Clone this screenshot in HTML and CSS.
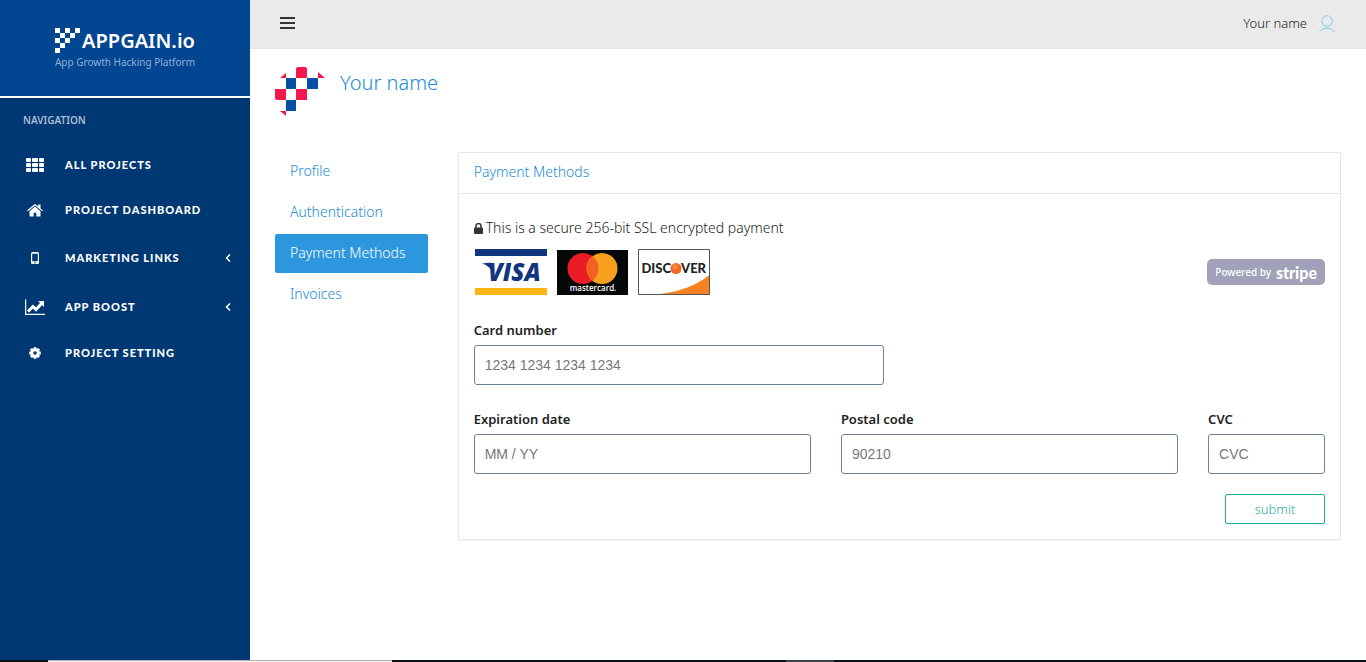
FILE: index.html
```
<!DOCTYPE html>
<html lang="en">
<head>
<meta charset="UTF-8">
<meta name="viewport" content="width=device-width, initial-scale=1">
<title>Payment Methods</title>
<link rel="stylesheet" href="styles.css">
</head>
<body>
<div class="wrapper">
  <!-- sidebar -->
  <aside class="sidebar">
    <a href="#" class="brand">
      <span class="brand-row">
        <svg class="brand-mark" width="25" height="25" viewBox="0 0 5 5" fill="#fff" shape-rendering="crispEdges"><path d="M0 0h1v1H0zM2 0h1v1H2zM4 0h1v1H4zM1 1h1v1H1zM3 1h1v1H3zM0 2h1v1H0zM2 2h1v1H2zM1 3h1v1H1zM0 4h1v1H0z"/></svg>
        <span class="brand-name">APPGAIN.io</span>
      </span>
      <span class="brand-tag">App Growth Hacking Platform</span>
    </a>
    <p class="nav-title">NAVIGATION</p>
    <nav class="nav">
      <a href="#"><span class="icon"><svg width="18" height="14" viewBox="0 0 18 14" fill="#fff"><rect width="5" height="4" rx="1"/><rect x="6" width="6" height="4" rx="1"/><rect x="13" width="5" height="4" rx="1"/><rect y="5" width="5" height="4" rx="1"/><rect x="6" y="5" width="6" height="4" rx="1"/><rect x="13" y="5" width="5" height="4" rx="1"/><rect y="10" width="5" height="4" rx="1"/><rect x="6" y="10" width="6" height="4" rx="1"/><rect x="13" y="10" width="5" height="4" rx="1"/></svg></span>ALL PROJECTS</a>
      <a href="#"><span class="icon"><svg width="16" height="16" viewBox="0 0 16 16" fill="#fff"><path d="M8 4.6 2.5 9.2V14q0 .6.6.6h3.600v-3.800h2.600v3.800h3.600q.6 0 .6-.6V9.200z"/><path d="M15.800 8.300 13.500 6.400V2.400h-2.300v2L8.900 2.500q-.9-.7-1.800 0L.2 8.300l.7.900L8 3.400l7.100 5.800z"/></svg></span>PROJECT DASHBOARD</a>
      <a href="#"><span class="icon"><svg width="8" height="20" viewBox="0 0 8 20"><path d="M1.500 4h5Q8 4 8 5.500v9Q8 16 6.500 16h-5Q0 16 0 14.500v-9Q0 4 1.500 4zM1.200 5.800v7.400h5.600V5.800zM4 14a.7.7 0 1 0 .01 0z" fill="#fff" fill-rule="evenodd"/></svg></span>MARKETING LINKS<svg class="arrow" width="6" height="8" viewBox="0 0 6 8"><path d="M5 .5 1.500 4 5 7.500" fill="none" stroke="#fff" stroke-width="1.500"/></svg></a>
      <a href="#"><span class="icon"><svg width="20" height="18" viewBox="0 0 20 18"><path d="M.6 1.500v14.900H20" fill="none" stroke="#fff" stroke-width="1.300"/><path d="m3 13.500 5-5 3 3 6-6.500" fill="none" stroke="#fff" stroke-width="3"/><path d="M13 3h6v6z" fill="#fff"/></svg></span>APP BOOST<svg class="arrow" width="6" height="8" viewBox="0 0 6 8"><path d="M5 .5 1.500 4 5 7.500" fill="none" stroke="#fff" stroke-width="1.500"/></svg></a>
      <a href="#"><span class="icon"><svg width="12" height="14" viewBox="-6 -7 12 14"><g fill="#fff"><rect x="-1.500" y="-5.800" width="3" height="11.600" rx=".5"/><rect x="-1.500" y="-5.800" width="3" height="11.600" rx=".5" transform="rotate(45)"/><rect x="-1.500" y="-5.800" width="3" height="11.600" rx=".5" transform="rotate(90)"/><rect x="-1.500" y="-5.800" width="3" height="11.600" rx=".5" transform="rotate(135)"/><circle r="4.600"/></g><circle r="1.800" fill="#003873"/></svg></span>PROJECT SETTING</a>
    </nav>
  </aside>

  <div class="main">
    <!-- top bar -->
    <header class="topbar">
      <button type="button" class="menu-btn" aria-label="Menu"><svg width="15" height="12" viewBox="0 0 15 12" fill="#333"><path d="M0 0h15v2H0zM0 5h15v2H0zM0 10h15v2H0z"/></svg></button>
      <a href="#" class="user">Your name
        <svg width="16" height="17" viewBox="0 0 16 17" fill="none" stroke="#7fcbee"><circle cx="8" cy="6" r="5.300"/><path d="M.5 16.500q3-3.500 7.500-3.500t7.500 3.500"/></svg>
      </a>
    </header>

    <main class="content">
      <div class="profile">
        <svg class="avatar" width="50" height="50" viewBox="0 0 50 50">
          <path fill="#f4184f" d="M21 2q0-2 2-2h7q2 0 2 2v9H21zM5 11l6-5v5zM43 5l7 6h-7zM0 22h11v11H2q-2 0-2-2zM21 22h11v11H21zM5 44h6v5z"/>
          <path fill="#0450a4" d="M11 11h10v11H11zM32 11h11v11H32zM11 33h10v11H11z"/>
        </svg>
        <h1>Your name</h1>
      </div>

      <div class="grid">
        <nav class="tabs">
          <a href="#">Profile</a>
          <a href="#">Authentication</a>
          <a href="#" class="active">Payment Methods</a>
          <a href="#">Invoices</a>
        </nav>

        <section class="panel">
          <h2>Payment Methods</h2>
          <form class="panel-body">
            <p class="secure"><svg width="9" height="11" viewBox="0 0 9 11"><path d="M2 5V3a2.500 2.500 0 0 1 5 0v2" fill="none" stroke="#333" stroke-width="1.500"/><rect y="4.500" width="9" height="6.500" rx="1" fill="#333"/></svg>This is a secure 256-bit SSL encrypted payment</p>
            <div class="cards">
              <svg width="72" height="46" viewBox="0 0 72 46">
                <path fill="#12357f" d="M0 0h72v7H0z"/>
                <path fill="#fdb515" d="M0 39h72v7H0z"/>
                <path fill="#12357f" d="M7 14.500q5-1 9-.7l2 5-2 2q-3-4.600-9-6.300z"/>
                <text class="visa" x="13" y="32">VISA</text>
              </svg>
              <svg width="71" height="45" viewBox="0 0 71 45">
                <path fill="#050708" d="M0 0h71v45H0z"/>
                <circle cx="26" cy="18.500" r="15.500" fill="#eb1c26"/>
                <circle cx="45" cy="18.500" r="15.500" fill="#f89f1d"/>
                <path fill="#f26022" d="M35.500 6.250a15.500 15.500 0 0 1 0 24.500 15.500 15.500 0 0 1 0-24.500z"/>
                <text class="mastercard" x="36" y="41" text-anchor="middle">mastercard.</text>
              </svg>
              <svg width="72" height="46" viewBox="0 0 72 46">
                <path fill="#f58220" d="M16 45.500Q50 43 71.500 26v19.500z"/>
                <path fill="none" stroke="#555" d="M.5.5h71v45H.5z"/>
                <text class="discover" x="33" y="24" text-anchor="end">DISC</text>
                <circle cx="38" cy="19.500" r="5.500" fill="#ef6a24"/>
                <circle cx="37" cy="18" r="2.500" fill="#f58b42"/>
                <text class="discover" x="43" y="24">VER</text>
              </svg>
              <span class="stripe">Powered by <b>stripe</b></span>
            </div>
            <div class="grid fields">
              <div class="field w6">
                <label for="card">Card number</label>
                <input type="text" id="card" placeholder="1234 1234 1234 1234">
              </div>
              <div class="field w5">
                <label for="expiry">Expiration date</label>
                <input type="text" id="expiry" placeholder="MM / YY">
              </div>
              <div class="field w5">
                <label for="postal">Postal code</label>
                <input type="text" id="postal" placeholder="90210">
              </div>
              <div class="field w2">
                <label for="cvc">CVC</label>
                <input type="text" id="cvc" placeholder="CVC">
              </div>
            </div>
            <button type="submit" class="submit">submit</button>
          </form>
        </section>
      </div>
    </main>
  </div>
</div>
<!-- thin strip along the bottom edge -->
<div class="strip"><span class="light"></span><span class="grey"></span></div>
</body>
</html>
```

FILE: styles.css
```
* {
	box-sizing: border-box;
}
body {
	margin: 0;
	min-height: 100vh;
	display: flex;
	flex-direction: column;
	background-color: #fff;
	color: #222;
	font-family: "Noto Sans", "Open Sans", sans-serif;
	font-size: 13px;
	font-weight: 300;
	line-height: 20px;
}
a {
	color: #1a8ad6;
	text-decoration: none;
}
svg {
	flex: none;
}
h1, h2, p {
	margin: 0;
	font-weight: 300;
}
.wrapper {
	flex: 1;
	display: flex;
}
/* sidebar */
.sidebar {
	flex: none;
	width: 250px;
	background-color: #003873;
}
.brand {
	display: flex;
	flex-direction: column;
	align-items: center;
	height: 98px;
	padding-top: 28px;
	border-bottom: 2px solid #fff;
	background-color: #024590;
	color: #fff;
}
.brand-row {
	display: flex;
	gap: 2px;
}
.brand-name {
	font-size: 20px;
	font-weight: 600;
	line-height: 26px;
}
.brand-tag {
	color: #8fb0d6;
	font-size: 10px;
	font-weight: 400;
	line-height: 16px;
}
.nav-title {
	padding: 12px 23px 13px;
	color: #a9bdd3;
	font-size: 10px;
	font-weight: 600;
}
.nav a {
	display: flex;
	align-items: center;
	padding: 15px 19px 15px 20px;
	color: #fff;
	font-family: Lato, "Noto Sans", sans-serif;
	font-size: 11px;
	font-weight: 900;
	letter-spacing: 1px;
	line-height: 14px;
}
.icon {
	display: flex;
	justify-content: center;
	width: 30px;
	margin-right: 15px;
}
.arrow {
	margin-left: auto;
}
/* top bar */
.main {
	flex: 1;
	min-width: 0;
}
.topbar {
	display: flex;
	justify-content: space-between;
	align-items: center;
	height: 49px;
	padding: 0 31px 2px 30px;
	border-bottom: 1px solid #e4e4e4;
	background-color: #eaeaea;
}
.menu-btn {
	display: flex;
	padding: 0;
	border: 0;
	background: none;
	cursor: pointer;
}
.user {
	display: flex;
	align-items: center;
	gap: 12px;
	color: #222;
}
.content {
	padding: 18px 25px;
}
.profile {
	display: flex;
	gap: 15px;
	margin-bottom: 35px;
}
.profile h1 {
	color: #1a8ad6;
	font-size: 20px;
	line-height: 32px;
}
.grid {
	display: grid;
	grid-template-columns: repeat(12, minmax(0, 1fr));
	column-gap: 30px;
	align-items: start;
}
.tabs {
	grid-column: span 2;
	display: flex;
	flex-direction: column;
	gap: 2px;
	font-size: 14px;
}
.tabs a {
	padding: 9px 15px 10px;
	border-radius: 2px;
}
.tabs .active {
	background-color: #2c97de;
	color: #fff;
}
/* payment panel */
.panel {
	grid-column: span 10;
	border: 1px solid #e7e7e7;
	border-radius: 2px;
	box-shadow: 0 1px 1px rgba(0, 0, 0, 0.05);
}
.panel h2 {
	padding: 9px 15px 11px;
	border-bottom: 1px solid #e7e7e7;
	color: #1a8ad6;
	font-size: 14px;
}
.panel-body {
	display: flex;
	flex-direction: column;
	padding: 24px 15px 15px;
}
.secure {
	display: flex;
	align-items: center;
	gap: 3px;
	font-size: 14px;
}
.cards {
	display: flex;
	align-items: center;
	gap: 10px;
	margin: 11px 0 25px;
	padding-left: 1px;
}
.visa {
	fill: #12357f;
	font: italic 800 24px "Open Sans", sans-serif;
}
.mastercard {
	fill: #fff;
	font: 600 8px "Open Sans", sans-serif;
}
.discover {
	fill: #222;
	font: 900 13px Lato, sans-serif;
}
.stripe {
	display: flex;
	align-items: center;
	gap: 5px;
	height: 26px;
	margin-left: auto;
	padding: 0 8px;
	border-radius: 5px;
	background-color: #a1a2b9;
	color: #fff;
	font-size: 10px;
	font-weight: 500;
}
.stripe b {
	font: 900 16px Lato, sans-serif;
}
.fields {
	row-gap: 24px;
}
.field label {
	display: block;
	margin-bottom: 5px;
	font-weight: 600;
}
.field input {
	display: block;
	width: 100%;
	height: 40px;
	padding: 0 10px;
	border: 1px solid #6c7f95;
	border-radius: 3px;
	background-color: #fff;
	font-family: "Liberation Sans", Arial, sans-serif;
	font-size: 14px;
}
.field input::placeholder {
	color: #777;
}
/* the card number has its row to itself */
.w6 {
	grid-column: 1 / span 6;
}
.w5 {
	grid-column: span 5;
}
.w6 + .w5 {
	grid-column: 1 / span 5;
}
.w2 {
	grid-column: span 2;
}
.submit {
	align-self: flex-end;
	width: 100px;
	height: 30px;
	margin-top: 20px;
	padding: 0;
	border: 1px solid #1caf9a;
	border-radius: 2px;
	background-color: #fff;
	color: #1caf9a;
	font: inherit;
	cursor: pointer;
}
/* bottom strip */
.strip {
	display: flex;
	justify-content: space-between;
	height: 2px;
	padding: 0 532px 0 48px;
	background-color: #0a1119;
}
.light {
	width: 344px;
	border-top: 1px solid #b5b5b5;
	background-color: #f0f0f0;
}
.grey {
	width: 48px;
	background-color: #3c4349;
}
```
